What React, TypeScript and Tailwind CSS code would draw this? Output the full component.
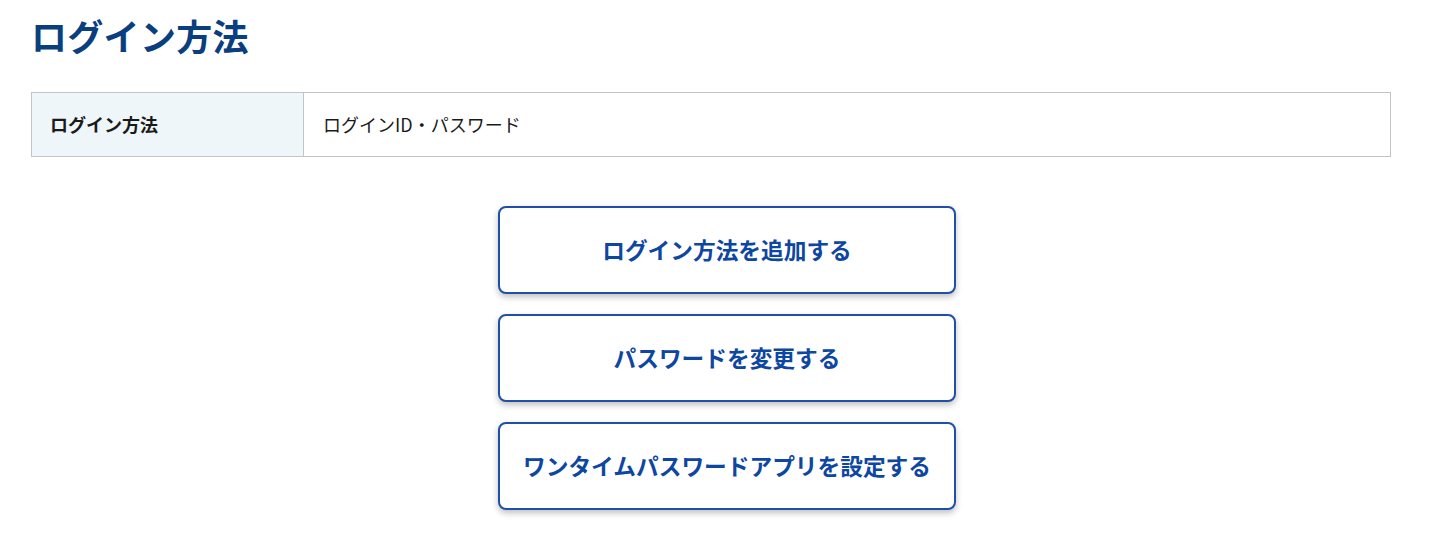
import React from "react";

const actions = [
  "ログイン方法を追加する",
  "パスワードを変更する",
  "ワンタイムパスワードアプリを設定する",
];

const LoginMethodPage = () => {
  return (
    <div
      className="min-h-screen bg-white px-[31px] pt-[8px]"
      style={{ fontFamily: '"Noto Sans CJK JP", "Noto Sans", sans-serif' }}
    >
      <h1 className="text-[36px] font-bold leading-[54px] tracking-[0.3px] text-[#0a3f7f]">
        ログイン方法
      </h1>

      {/* Login method table */}
      <div className="mt-[30px] flex w-[1360px] border border-[#c4c4c4]">
        <div className="flex h-[63px] w-[272px] items-center border-r border-[#c4c4c4] bg-[#eff6fa] pl-[18px] text-[18px] font-bold text-[#1a1a1a]">
          ログイン方法
        </div>
        <div className="flex items-center pl-[19px] text-[18px] text-[#1a1a1a]">
          ログインID・パスワード
        </div>
      </div>

      {/* Actions */}
      <div className="mt-[49px] ml-[467px] flex w-[458px] flex-col gap-[20px]">
        {actions.map((label) => (
          <button
            key={label}
            type="button"
            className="flex h-[88px] items-center justify-center rounded-[8px] border-2 border-[#1f4fa6] bg-white text-[22.7px] font-bold text-[#0d47a1] shadow-[0_3px_6px_rgba(0,0,0,0.25)]"
          >
            {label}
          </button>
        ))}
      </div>
    </div>
  );
};

export default LoginMethodPage;
